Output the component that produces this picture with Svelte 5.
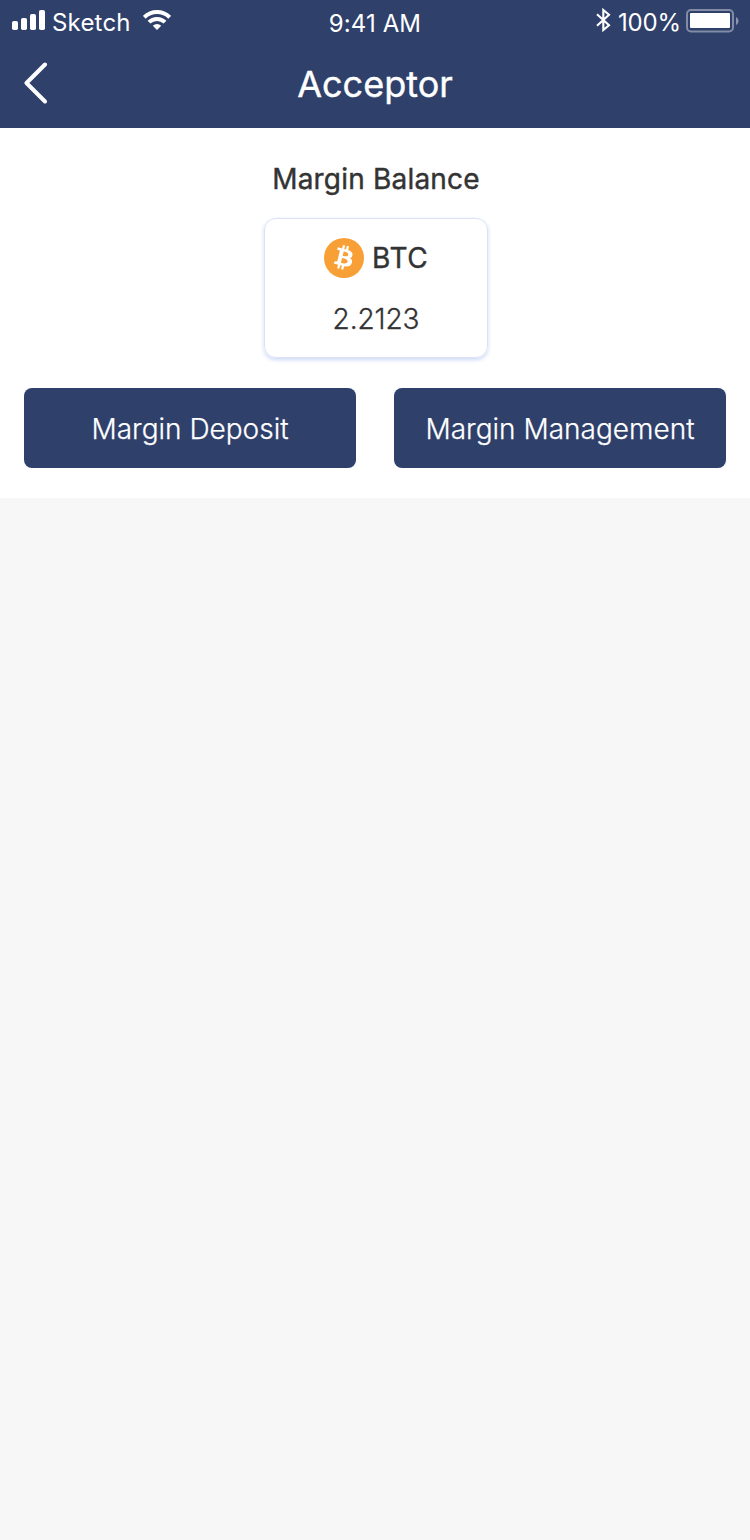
<script>
  const balance = { coin: 'BTC', amount: '2.2123' };
  const carrier = 'Sketch';
  const time = '9:41 AM';
  const charge = '100%';
</script>

<div class="screen">
  <header>
    <div class="status">
      <div class="left">
        <svg class="signal" width="34" height="20" viewBox="0 0 34 20" fill="#fff">
          <rect x="0" y="11" width="6" height="9" rx="1.8" />
          <rect x="9" y="8" width="6" height="12" rx="1.8" />
          <rect x="18" y="4" width="6" height="16" rx="1.8" />
          <rect x="27" y="0" width="6" height="20" rx="1.8" />
        </svg>
        <span class="carrier">{carrier}</span>
        <svg class="wifi" width="28" height="20" viewBox="0 0 28 20" fill="none" stroke="#fff" stroke-width="4">
          <path d="M1.300 7.300a18 18 0 0 1 25.400 0" />
          <path d="M6 12.200a11.300 11.300 0 0 1 16 0" />
          <path d="M14 20l-4.200-4.200a6 6 0 0 1 8.400 0z" fill="#fff" stroke="none" />
        </svg>
      </div>
      <span class="time">{time}</span>
      <div class="right">
        <svg class="bluetooth" width="15" height="24" viewBox="0 0 15 24" fill="none" stroke="#fff" stroke-width="2.1">
          <path d="M1 6.300L13 17.200L7.300 22V2L13 6.800L1 17.700" />
        </svg>
        <span class="charge">{charge}</span>
        <svg class="battery" width="53" height="24" viewBox="0 0 53 24">
          <rect x="1" y="1" width="46" height="21.500" rx="4" fill="none" stroke="#fff" stroke-opacity=".4" stroke-width="2" />
          <rect x="4" y="4" width="40" height="15" rx="1" fill="#fff" />
          <path d="M50 8v8c3.300-1.500 3.300-6.500 0-8z" fill="#fff" fill-opacity=".45" />
        </svg>
      </div>
    </div>
    <div class="nav">
      <svg class="back" width="26" height="42" viewBox="0 0 26 42" fill="none" stroke="#fff" stroke-width="4" stroke-linecap="round" stroke-linejoin="round">
        <path d="M22 2.500L3.500 21L22 39.500" />
      </svg>
      <h1>Acceptor</h1>
    </div>
  </header>

  <main>
    <h2>Margin Balance</h2>
    <section class="card">
      <div class="coin">
        <svg width="40" height="40" viewBox="0 0 32 32">
          <circle cx="16" cy="16" r="16" fill="#f89f36" />
          <path fill="#fff" d="M23.189 14.02c.314-2.096-1.283-3.223-3.465-3.975l.708-2.84-1.728-.43-.69 2.765c-.454-.114-.92-.22-1.385-.326l.695-2.783L15.596 6l-.708 2.839c-.376-.086-.746-.17-1.104-.26l.002-.009-2.384-.595-.46 1.846s1.283.294 1.256.312c.7.175.826.638.805 1.006l-.806 3.235c.048.012.11.03.18.057l-.183-.045-1.13 4.532c-.086.212-.303.531-.793.41.018.025-1.256-.313-1.256-.313l-.858 1.978 2.25.561c.418.105.828.215 1.231.318l-.715 2.872 1.727.43.708-2.84c.472.127.93.245 1.378.357l-.706 2.828 1.728.43.715-2.866c2.948.558 5.164.333 6.097-2.333.752-2.146-.037-3.385-1.588-4.192 1.13-.26 1.98-1.003 2.207-2.538zm-3.95 5.538c-.533 2.147-4.148.986-5.32.695l.95-3.805c1.172.293 4.929.872 4.37 3.11zm.535-5.569c-.487 1.953-3.495.96-4.47.717l.86-3.45c.975.243 4.118.696 3.61 2.733z" transform="translate(-.4 -.5)" />
        </svg>
        <span class="symbol">{balance.coin}</span>
      </div>
      <div class="amount">{balance.amount}</div>
    </section>
    <div class="actions">
      <button class="deposit">Margin Deposit</button>
      <button class="manage">Margin Management</button>
    </div>
  </main>
</div>

<style>
  :global(body) {
    background: #f7f7f7;
  }
  .screen {
    width: 750px;
    min-height: 1540px;
    background: #f7f7f7;
    font-family: Inter, 'Liberation Sans', sans-serif;
    color: #333;
  }
  header {
    height: 128px;
    background: #2f406b;
    color: #fff;
  }
  .status {
    height: 40px;
    display: grid;
    grid-template-columns: 1fr auto 1fr;
    font-size: 24px;
    line-height: 40px;
    white-space: nowrap;
  }
  .left,
  .right {
    display: flex;
    align-items: flex-start;
  }
  .left {
    padding-left: 12px;
  }
  .right {
    justify-content: flex-end;
    padding-right: 11px;
  }
  .carrier,
  .charge {
    padding-top: 3px;
  }
  .time {
    padding-top: 4px;
    letter-spacing: 0.1px;
  }
  .signal {
    margin-top: 10px;
  }
  .carrier {
    width: 91px;
    padding-left: 6px;
    box-sizing: border-box;
    letter-spacing: 0.2px;
  }
  .wifi {
    margin: 10px 0 0 6px;
  }
  .bluetooth {
    margin: 8px 7px 0 0;
  }
  .charge {
    width: 68px;
    letter-spacing: -0.2px;
  }
  .battery {
    margin-top: 9px;
  }
  .nav {
    height: 88px;
    display: grid;
    grid-template-columns: 48px 1fr 48px;
    align-items: start;
  }
  .back {
    margin: 22px 0 0 23px;
  }
  h1,
  h2,
  .symbol {
    font-weight: 400;
    -webkit-text-stroke: 0.4px currentColor;
  }
  h1 {
    margin: 0;
    font-size: 36px;
    line-height: 88px;
    text-align: center;
  }
  main {
    height: 370px;
    box-sizing: border-box;
    padding: 29px 24px 30px;
    background: #fff;
    display: flex;
    flex-direction: column;
    align-items: center;
  }
  h2 {
    margin: 0;
    padding-left: 2px;
    font-size: 28px;
    line-height: 44px;
    letter-spacing: 0.2px;
  }
  .card {
    width: 224px;
    height: 140px;
    margin: 17px 0 0 2px;
    box-sizing: border-box;
    border: 1px solid #dbe2f8;
    border-radius: 12px;
    box-shadow: 0 2px 4px #cdd9f5;
    padding-top: 19px;
  }
  .coin {
    display: flex;
    padding-left: 59px;
    gap: 8px;
    font-size: 28px;
    line-height: 40px;
    letter-spacing: 0.7px;
  }
  .amount {
    margin-top: 20px;
    font-size: 28px;
    font-weight: 300;
    line-height: 42px;
    letter-spacing: -0.1px;
    text-align: center;
    -webkit-text-stroke: 0.3px currentColor;
  }
  .actions {
    width: 100%;
    margin-top: 30px;
    display: flex;
    justify-content: space-between;
  }
  button {
    width: 332px;
    height: 80px;
    padding: 2px 0 0;
    border: 0;
    border-radius: 8px;
    background: #2f406b;
    color: #fff;
    font: 300 28px/78px Inter, 'Liberation Sans', sans-serif;
    white-space: nowrap;
    -webkit-text-stroke: 0.25px currentColor;
  }
</style>
